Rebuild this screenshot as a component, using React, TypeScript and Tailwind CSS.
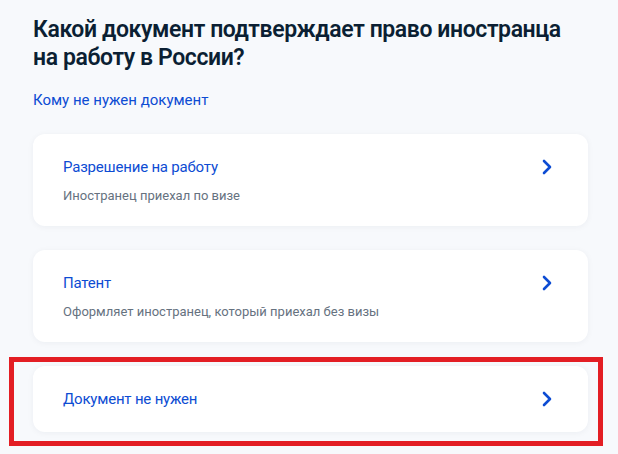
const options = [
  { title: "Разрешение на работу", hint: "Иностранец приехал по визе" },
  { title: "Патент", hint: "Оформляет иностранец, который приехал без визы" },
];

function Chevron() {
  return (
    <svg width="10" height="16" viewBox="0 0 10 16" fill="none" className="shrink-0">
      <path d="M2 2l6 6-6 6" stroke="#0d4cd3" strokeWidth="2.6" strokeLinecap="round" strokeLinejoin="round" />
    </svg>
  );
}

export default function App() {
  return (
    <div className="min-h-[454px] bg-[#f7f9fc] pl-[33px] pr-[30px] pt-[16px] pb-6 font-['Roboto',sans-serif]">
      <h1 className="text-[23px] leading-[28px] font-semibold tracking-[-0.4px] text-[#0b1f33]">
        Какой документ подтверждает право иностранца на работу в России?
      </h1>
      <a href="#" className="mt-[18px] block text-[15px] leading-5 text-[#0d4cd3]">
        Кому не нужен документ
      </a>

      <div className="mt-[24px] flex flex-col gap-6">
        {options.map((o) => (
          <div
            key={o.title}
            className="rounded-xl bg-white pl-[30px] pr-[36px] pt-[21px] pb-[20px] shadow-[0_1px_6px_rgba(11,31,51,0.05)]"
          >
            <div className="flex items-center justify-between">
              <span className="text-[15px] leading-6 tracking-[-0.2px] text-[#0d4cd3]">{o.title}</span>
              <Chevron />
            </div>
            <p className="mt-[7px] text-[13px] leading-5 text-[#66727f]">{o.hint}</p>
          </div>
        ))}

        <div className="relative">
          <div className="flex items-center justify-between rounded-xl bg-white pl-[30px] pr-[36px] py-[21px] shadow-[0_1px_6px_rgba(11,31,51,0.05)]">
            <span className="text-[15px] leading-6 tracking-[-0.2px] text-[#0d4cd3]">Документ не нужен</span>
            <Chevron />
          </div>
          {/* highlight frame */}
          <span className="pointer-events-none absolute -left-[24px] -top-[9px] -right-[15px] -bottom-[14px] border-[5px] border-[#e31e24]" />
        </div>
      </div>
    </div>
  );
}
